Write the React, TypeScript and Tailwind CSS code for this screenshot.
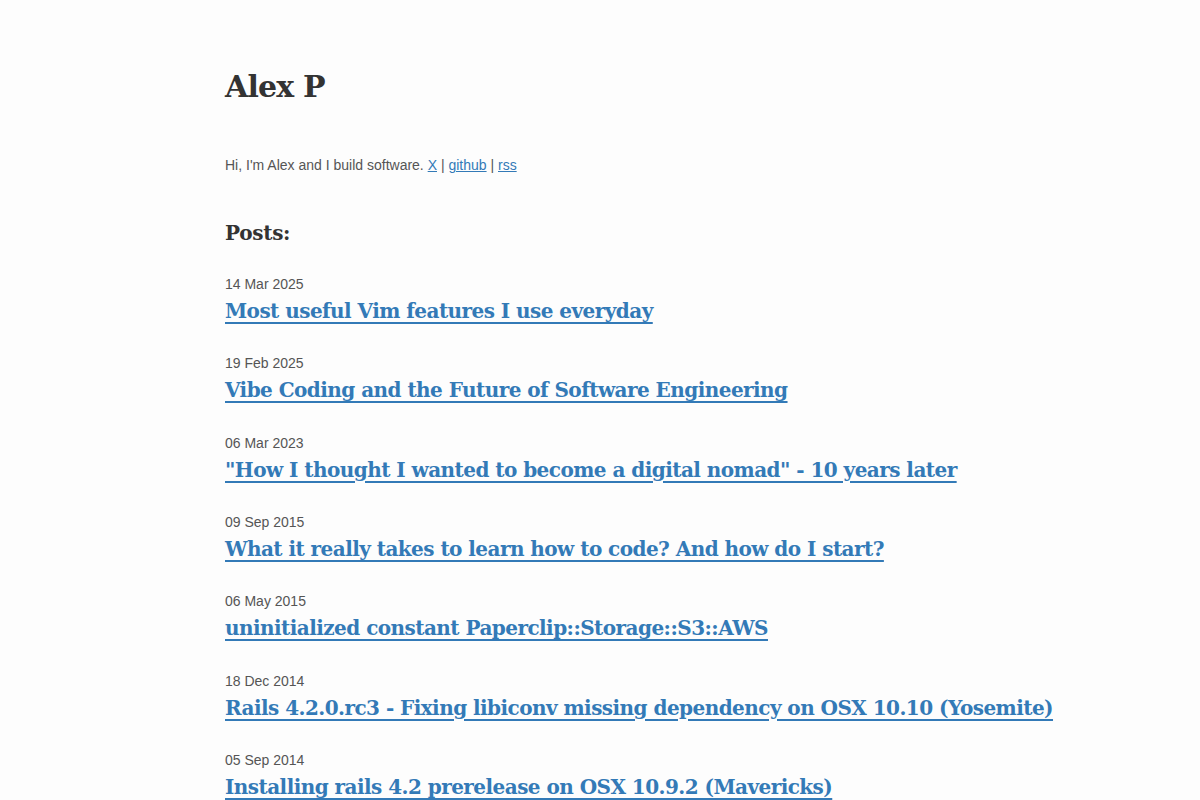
const posts = [
  { date: "14 Mar 2025", title: "Most useful Vim features I use everyday" },
  { date: "19 Feb 2025", title: "Vibe Coding and the Future of Software Engineering" },
  { date: "06 Mar 2023", title: "\"How I thought I wanted to become a digital nomad\" - 10 years later" },
  { date: "09 Sep 2015", title: "What it really takes to learn how to code? And how do I start?" },
  { date: "06 May 2015", title: "uninitialized constant Paperclip::Storage::S3::AWS" },
  { date: "18 Dec 2014", title: "Rails 4.2.0.rc3 - Fixing libiconv missing dependency on OSX 10.10 (Yosemite)" },
  { date: "05 Sep 2014", title: "Installing rails 4.2 prerelease on OSX 10.9.2 (Mavericks)" },
];

const serif = "font-['DejaVu_Serif',serif]";

export default function App() {
  return (
    <div className="min-h-screen bg-[#fdfdfd] text-[#333] font-['Liberation_Sans',Arial,sans-serif]">
      <div className="pl-[225px] pr-[60px] pt-[67px] pb-10">
        <h1 className={`${serif} font-bold text-[30px] leading-[40px] tracking-[-0.8px] text-[#333]`}>Alex P</h1>
        <p className="mt-[48px] text-[14px] leading-[20px] text-[#555]">
          Hi, I'm Alex and I build software.{" "}
          <a href="#" className="text-[#337ab7] underline">X</a> |{" "}
          <a href="#" className="text-[#337ab7] underline">github</a> |{" "}
          <a href="#" className="text-[#337ab7] underline">rss</a>
        </p>
        <h2 className={`${serif} font-bold text-[20px] leading-[30px] mt-[43px] tracking-[-0.3px] text-[#333]`}>Posts:</h2>
        <ul className="mt-[28px] flex flex-col gap-[25.33px]">
          {posts.map((p) => (
            <li key={p.date + p.title} className="flex flex-col items-start">
              <span className="text-[14px] leading-[16px] text-[#555]">{p.date}</span>
              <a href="#" className={`${serif} font-bold text-[20px] leading-[38px] tracking-[-0.55px] text-[#337ab7] underline underline-offset-[4px]`}>
                {p.title}
              </a>
            </li>
          ))}
        </ul>
      </div>
    </div>
  );
}
